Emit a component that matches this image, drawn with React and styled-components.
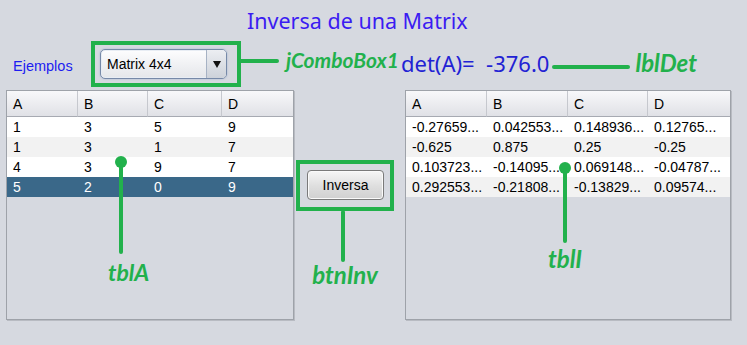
import React from 'react';
import styled, { createGlobalStyle } from 'styled-components';

const GlobalStyle = createGlobalStyle`
  html, body {
    margin: 0;
    padding: 0;
    background: #d6d9e0;
  }
  body {
    font-family: 'Liberation Sans', Arial, sans-serif;
  }
`;

const GREEN = '#22b14c';

const Frame = styled.div`
  width: 747px;
  height: 345px;
  overflow: hidden;
  background: #d6d9e0;
`;

const Title = styled.h1`
  margin: 0;
  padding: 8px 0 0 247px;
  height: 41px;
  box-sizing: border-box;
  font: 400 21.5px/26px 'Noto Sans', sans-serif;
  color: #3b1cf2;
`;

const Controls = styled.div`
  display: flex;
  align-items: center;
  height: 46px;
  padding-left: 13px;
`;

const Examples = styled.span`
  width: 78px;
  margin-top: 3px;
  font-size: 14.5px;
  color: #1d1df0;
`;

/* green annotation frame drawn round a control */
const Highlight = styled.div`
  display: flex;
  border: 4px solid ${GREEN};
  padding: ${(p) => p.$pad};
`;

const Combo = styled.div`
  display: flex;
  width: 127px;
  height: 30px;
  box-sizing: border-box;
  border: 1px solid #7689a8;
  border-radius: 5px;
  overflow: hidden;
  background: linear-gradient(#fdfdfe, #e4e6ea);
  box-shadow: inset 0 0 0 1px #e8edf4, 0 0 2px #9fb3d2;
`;

const ComboText = styled.span`
  flex: 1;
  padding-left: 6px;
  font-size: 14px;
  line-height: 28px;
  color: #000;
`;

const ComboArrow = styled.span`
  display: flex;
  align-items: center;
  justify-content: center;
  width: 19px;
  border-left: 1px solid #a6b2c4;
  background: linear-gradient(#eceef2, #cdd2da);
`;

const Connector = styled.span`
  flex: none;
  width: ${(p) => p.$w}px;
  height: 4px;
  margin: ${(p) => p.$m || 0};
  border-radius: 2px;
  background: ${GREEN};
`;

const Stem = styled.span`
  width: 4px;
  height: ${(p) => p.$h}px;
  margin: ${(p) => p.$m || 0};
  border-radius: 2px;
  background: ${GREEN};
`;

const Dot = styled.span`
  width: 12px;
  height: 12px;
  margin: ${(p) => p.$m || 0};
  margin-bottom: -6px;
  border-radius: 50%;
  background: ${GREEN};
`;

const Tag = styled.span`
  flex: none;
  margin: ${(p) => p.$m || 0};
  font: italic 700 ${(p) => p.$size || 23}px/1 'Lato', sans-serif;
  color: ${GREEN};
  white-space: nowrap;
`;

const DetLabel = styled.span`
  margin: 0 3px 3px 2px;
  font: 400 22px/26px 'Noto Sans', sans-serif;
  color: #2222d4;
  white-space: pre;
`;

const Main = styled.div`
  display: flex;
  align-items: flex-start;
  padding: 3px 0 0 6px;
`;

const Panel = styled.div`
  position: relative;
  width: ${(p) => p.$width}px;
  height: 230px;
  box-sizing: border-box;
  border: 1px solid #9ea2a9;
  box-shadow: 1px 1px 0 #b8bbc2;
  background: #d6d9e0;
`;

const Grid = styled.div`
  display: grid;
  grid-template-columns: ${(p) => p.$cols};
  font-size: 14px;
`;

const HeadCell = styled.div`
  display: flex;
  align-items: center;
  height: 26px;
  padding-left: 6px;
  box-sizing: border-box;
  background: linear-gradient(#f8f8fa, #e0e1e6);
  border-right: 1px solid #c6c8ce;
  border-bottom: 1px solid #a7aab2;
  color: #000;
  &:nth-child(4) {
    border-right: none;
  }
`;

const Cell = styled.div`
  display: flex;
  align-items: center;
  height: 20px;
  padding-left: 6px;
  white-space: nowrap;
  background: ${(p) => (p.$selected ? '#3a6889' : p.$odd ? '#f2f2f2' : '#fff')};
  color: ${(p) => (p.$selected ? '#fff' : '#000')};
`;

/* pointer drawn over a table panel */
const Pointer = styled.div`
  position: absolute;
  left: ${(p) => p.$x}px;
  top: ${(p) => p.$y}px;
  display: flex;
  flex-direction: column;
  align-items: ${(p) => (p.$start ? 'flex-start' : 'center')};
`;

const Middle = styled.div`
  display: flex;
  flex-direction: column;
  align-items: flex-start;
  width: 111px;
  padding: 70px 0 0 2px;
  box-sizing: border-box;
`;

const Callout = styled.div`
  display: flex;
  flex-direction: column;
  align-items: center;
`;

const Button = styled.button`
  width: 77px;
  height: 30px;
  padding: 0;
  border: 1px solid #7a7a7a;
  border-radius: 4px;
  background: linear-gradient(#f6f6f6, #dedede 55%, #d0d0d0);
  box-shadow: inset 0 0 0 1px #fafafa;
  font: 400 14px 'Liberation Sans', Arial, sans-serif;
  color: #000;
`;

const matrixA = [
  ['1', '3', '5', '9'],
  ['1', '3', '1', '7'],
  ['4', '3', '9', '7'],
  ['5', '2', '0', '9'],
];

const matrixI = [
  ['-0.27659...', '0.042553...', '0.148936...', '0.12765...'],
  ['-0.625', '0.875', '0.25', '-0.25'],
  ['0.103723...', '-0.14095...', '0.069148...', '-0.04787...'],
  ['0.292553...', '-0.21808...', '-0.13829...', '0.09574...'],
];

const Table = ({ cols, rows, selected }) => (
  <Grid $cols={cols}>
    {['A', 'B', 'C', 'D'].map((h) => (
      <HeadCell key={h}>{h}</HeadCell>
    ))}
    {rows.map((row, i) =>
      row.map((v, j) => (
        <Cell key={`${i}-${j}`} $odd={i % 2 === 1} $selected={i === selected}>
          {v}
        </Cell>
      ))
    )}
  </Grid>
);

export default function App() {
  return (
    <Frame>
      <GlobalStyle />
      <Title>Inversa de una Matrix</Title>
      <Controls>
        <Examples>Ejemplos</Examples>
        <Highlight $pad="4px 10px 4px 5px">
          <Combo>
            <ComboText>Matrix 4x4</ComboText>
            <ComboArrow>
              <svg width="8" height="7" viewBox="0 0 8 7">
                <polygon points="0,0 8,0 4,7" fill="#111" />
              </svg>
            </ComboArrow>
          </Combo>
        </Highlight>
        <Connector $w={41} $m="0 0 7px -3px" />
        <Tag $size={21} $m="0 0 10px 7px">jComboBox1</Tag>
        <DetLabel>{'det(A)=  -376.0'}</DetLabel>
        <Connector $w={78} $m="6px 0 0 0" />
        <Tag $size={24} $m="0 0 2px 5px">lblDet</Tag>
      </Controls>
      <Main>
        <Panel $width={288}>
          <Table cols="71px 70px 74px 71px" rows={matrixA} selected={3} />
          <Pointer $start $x={101} $y={65}>
            <Dot $m="0 0 0 7px" />
            <Stem $h={92} $m="0 0 0 11px" />
            <Tag $m="7px 0 0 0">tblA</Tag>
          </Pointer>
        </Panel>
        <Middle>
          <Callout>
            <Highlight $pad="6px 6px 7px 7px">
              <Button>Inversa</Button>
            </Highlight>
            <Stem $h={52} $m="-1px 4px 0 0" />
            <Tag $size={24} $m="1px 0 0 0">btnInv</Tag>
          </Callout>
        </Middle>
        <Panel $width={326}>
          <Table cols="81px 81px 80px 82px" rows={matrixI} />
          <Pointer $x={142} $y={71}>
            <Dot />
            <Stem $h={75} />
            <Tag $size={24} $m="4px 0 0 0">tblI</Tag>
          </Pointer>
        </Panel>
      </Main>
    </Frame>
  );
}
